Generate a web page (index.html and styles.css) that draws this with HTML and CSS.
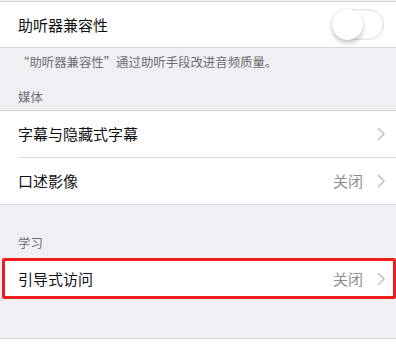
FILE: index.html
```html
<!DOCTYPE html>
<html lang="zh-CN">
<head>
<meta charset="utf-8">
<link rel="stylesheet" href="styles.css">
</head>
<body>
<div class="screen">
  <div class="group first">
    <div class="row">
      <span class="label">助听器兼容性</span>
      <span class="switch"><span class="knob"></span></span>
    </div>
  </div>
  <div class="footer">“助听器兼容性”通过助听手段改进音频质量。</div>
  <div class="header media">媒体</div>
  <div class="group">
    <div class="row sep">
      <span class="label">字幕与隐藏式字幕</span>
      <span class="detail">
        <svg class="chev" width="8" height="14" viewBox="0 0 8 14"><polyline points="1,1 7,7 1,13" fill="none" stroke="#c4c4c9" stroke-width="1.6"/></svg>
      </span>
    </div>
    <div class="row">
      <span class="label">口述影像</span>
      <span class="detail">
        <span class="value">关闭</span>
        <svg class="chev" width="8" height="14" viewBox="0 0 8 14"><polyline points="1,1 7,7 1,13" fill="none" stroke="#c4c4c9" stroke-width="1.6"/></svg>
      </span>
    </div>
  </div>
  <div class="header learn">学习</div>
  <div class="group marked">
    <div class="row">
      <span class="label">引导式访问</span>
      <span class="detail">
        <span class="value">关闭</span>
        <svg class="chev" width="8" height="14" viewBox="0 0 8 14"><polyline points="1,1 7,7 1,13" fill="none" stroke="#c4c4c9" stroke-width="1.6"/></svg>
      </span>
    </div>
  </div>
  <div class="gap"></div>
  <div class="tail"></div>
</div>
</body>
</html>
```

FILE: styles.css
```css
html, body {
  margin: 0;
  padding: 0;
}
body {
  background: #efeff4;
  font-family: "Noto Sans CJK SC", "Noto Sans", sans-serif;
  width: 396px;
  height: 347px;
  overflow: hidden;
}
.screen {
  display: flex;
  flex-direction: column;
  padding-top: 1px;
}
.group {
  background: #fff;
  border-top: 1px solid #d6d6da;
  border-bottom: 1px solid #d6d6da;
  display: flex;
  flex-direction: column;
}
.row {
  height: 46px;
  display: flex;
  align-items: center;
  justify-content: space-between;
  padding: 0 11px 0 18px;
  position: relative;
}
.first .row {
  height: 45px;
  padding-right: 12px;
}
.row.sep::after {
  content: "";
  position: absolute;
  left: 18px;
  right: 0;
  bottom: -1px;
  height: 1px;
  background: #dcdce0;
}
.row.sep {
  margin-bottom: 1px;
}
.label {
  font-size: 15px;
  color: #111;
  line-height: 20px;
}
.detail {
  display: flex;
  align-items: center;
  gap: 14px;
}
.value {
  font-size: 15px;
  color: #8e8e93;
  line-height: 20px;
}
.chev {
  display: block;
}
.switch {
  width: 52px;
  height: 31px;
  border-radius: 16px;
  background: #fff;
  box-shadow: inset 0 0 0 1.5px #e6e6ea;
  position: relative;
}
.knob {
  position: absolute;
  left: 0;
  top: 0;
  width: 31px;
  height: 31px;
  border-radius: 50%;
  background: #fff;
  box-shadow: 0 0 0 0.5px rgba(0,0,0,0.08), 0 3px 5px rgba(0,0,0,0.22);
}
.footer {
  font-size: 12.4px;
  line-height: 16px;
  color: #6d6d72;
  padding: 6px 17px 0;
}
.header {
  font-size: 12.4px;
  line-height: 16px;
  color: #6d6d72;
  padding-left: 18px;
}
.header.media {
  padding-top: 19px;
  padding-bottom: 5px;
}
.header.learn {
  padding-top: 30px;
  padding-bottom: 7px;
}
.group.marked {
  border: 3px solid #ee1c1c;
  border-radius: 2px;
  margin-left: 2px;
}
.marked .row {
  height: 35px;
  padding-left: 13px;
  padding-right: 8px;
}
.gap {
  height: 39px;
}
.tail {
  border-top: 1px solid #d6d6da;
  background: #fff;
  height: 8px;
}
```
